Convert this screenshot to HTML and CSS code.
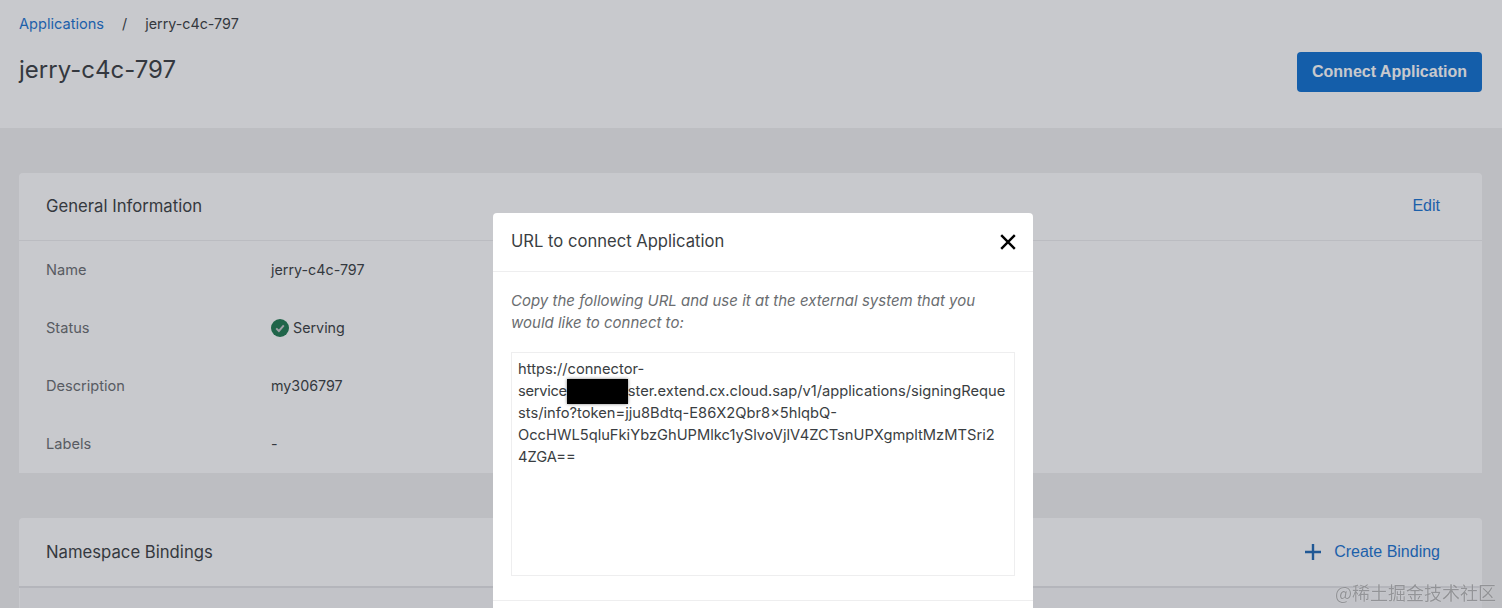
FILE: index.html
```html
<!DOCTYPE html>
<html lang="en">
<head>
<meta charset="utf-8">
<title>jerry-c4c-797</title>
<link rel="stylesheet" href="styles.css">
</head>
<body>
<div class="page">
  <header class="head">
    <div class="head-main">
      <nav class="crumbs"><a class="link">Applications</a><span class="sep">/</span><span>jerry-c4c-797</span></nav>
      <h1 class="title">jerry-c4c-797</h1>
    </div>
    <button class="primary">Connect Application</button>
  </header>
  <main class="content">
    <section class="card card-info">
      <div class="card-head">
        <h2 class="card-title">General Information</h2>
        <a class="action">Edit</a>
      </div>
      <dl class="rows">
        <div class="row"><dt>Name</dt><dd>jerry-c4c-797</dd></div>
        <div class="row"><dt>Status</dt><dd class="status">
          <svg class="check" viewBox="0 0 18 18" width="18" height="18"><circle cx="9" cy="9" r="9" fill="#1f7a50"/><path d="M5.2 9.3l2.7 2.7 4.9-5.6" fill="none" stroke="#c8c9cd" stroke-width="1.9"/></svg>Serving</dd></div>
        <div class="row"><dt>Description</dt><dd>my306797</dd></div>
        <div class="row"><dt>Labels</dt><dd>-</dd></div>
      </dl>
    </section>
    <section class="card card-bind">
      <div class="card-head">
        <h2 class="card-title">Namespace Bindings</h2>
        <a class="action action-add"><svg viewBox="0 0 16 16" width="16" height="16"><path d="M8 0v16M0 8h16" fill="none" stroke="#1f69b5" stroke-width="2.4"/></svg>Create Binding</a>
      </div>
      <div class="table-top"></div>
    </section>
  </main>
</div>
<div class="overlay"></div>
<div class="modal">
  <div class="modal-head">
    <h3 class="modal-title">URL to connect Application</h3>
    <svg class="close" viewBox="0 0 16 16" width="16" height="16"><path d="M1.2 1.2l13.6 13.6M14.8 1.2L1.2 14.8" fill="none" stroke="#000" stroke-width="2.4"/></svg>
  </div>
  <div class="modal-body">
    <p class="hint">Copy the following URL and use it at the external system that you would like to connect to:</p>
    <div class="url">https://connector-<span class="tight">service</span><span class="redact"></span>ster.extend.cx.cloud.sap/v1/applications/signingRequests/info?token=jju8Bdtq-E86X2Qbr8x5hlqbQ-OccHWL5qluFkiYbzGhUPMlkc1ySlvoVjlV4ZCTsnUPXgmpltMzMTSri2<br>4ZGA==</div>
  </div>
  <div class="modal-foot"></div>
</div>
<div class="watermark">@稀土掘金技术社区</div>
</body>
</html>
```
FILE: styles.css
```css
* { box-sizing: border-box; }
html, body { height: 100%; }
body {
  margin: 0;
  overflow: hidden;
  font-family: "Inter", "Liberation Sans", sans-serif;
  font-size: 14.3px;
  color: #3a3e42;
  background: #f3f4f5;
}
.page { height: 608px; overflow: hidden; background: #f0f0f0; }
.head {
  height: 128px;
  background: #fff;
  display: flex;
  justify-content: space-between;
  align-items: flex-start;
  padding: 14px 20px 0 19px;
}
.crumbs { display: flex; line-height: 20px; }
.link { color: #1a73d1; font-size: 14.6px; }
.sep { margin: 0 18px; }
.title { margin: 18px 0 0; font-size: 24px; line-height: 36px; font-weight: 400; }
.primary {
  margin-top: 38px;
  width: 185px;
  height: 40px;
  border: 0;
  border-radius: 4px;
  background: #0f70d1;
  color: #fff;
  font: 700 16px "Liberation Sans", sans-serif;
}
.content { padding: 45px 20px 0 19px; display: flex; flex-direction: column; gap: 45px; }
.card { background: #fff; border-radius: 4px 4px 0 0; }
.card-info { height: 300px; }
.card-head {
  height: 68px;
  padding: 0 42px 0 27px;
  display: flex;
  justify-content: space-between;
  align-items: center;
  border-bottom: 1px solid #eeeeef;
}
.card-info .card-head { padding-bottom: 1px; }
.card-title { margin: 0; font-size: 16.7px; font-weight: 400; color: #3a3e42; }
.action { color: #1a73d1; font: 16px "Liberation Sans", sans-serif; }
.action-add { display: flex; align-items: center; gap: 13px; }
.rows { margin: 0; padding: 0 27px; }
.row { display: flex; height: 58px; align-items: center; padding-bottom: 1px; }
.row dt { width: 225px; color: #6a6d70; font-size: 14.6px; }
.row dd { margin: 0; }
.status { display: flex; align-items: center; gap: 4px; }
.card-bind .card-head { height: 70px; border-bottom: 2px solid #e4e5e7; }
.table-top { height: 30px; margin-left: 1px; background: #f7f7f8; }
.overlay { position: fixed; inset: 0; background: rgba(36, 40, 56, 0.25); }
.modal {
  position: fixed;
  left: 493px;
  top: 213px;
  width: 540px;
  height: 460px;
  background: #fff;
  border-radius: 4px;
}
.modal-head {
  height: 59px;
  padding: 0 17px 0 18px;
  display: flex;
  justify-content: space-between;
  align-items: center;
  border-bottom: 1px solid #eeeeef;
}
.modal-title { margin: 0 0 2px; font-size: 16.6px; font-weight: 400; }
.modal-body { height: 329px; padding: 18px 18px 0; border-bottom: 1px solid #eeeeef; }
.hint { margin: 0; font-style: italic; font-size: 15px; color: #6a6d70; line-height: 22px; }
.url {
  margin-top: 18px;
  height: 224px;
  padding: 5px 6px;
  border: 1px solid #eeeeef;
  font-size: 14.7px;
  line-height: 22px;
  overflow-wrap: anywhere;
}
.tight { letter-spacing: -0.3px; }
.redact {
  padding: 3.5px 30.5px;
  background: #000;
  box-shadow: 0 0 3px rgba(0, 0, 0, 0.5);
}
.watermark {
  position: fixed;
  right: 6px;
  bottom: 4px;
  font: 18px "Noto Sans CJK SC", sans-serif;
  line-height: 24px;
  color: rgba(120, 122, 126, 0.75);
  text-shadow: 0 0 1px rgba(255, 255, 255, 0.6);
}
```
